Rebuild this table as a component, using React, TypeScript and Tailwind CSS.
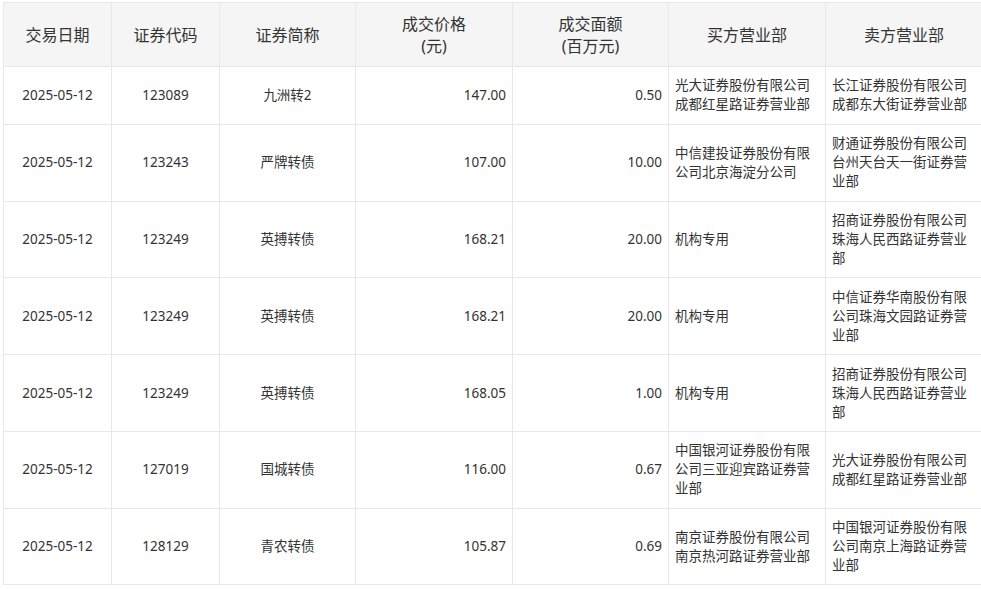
import React from "react";

type Row = {
  date: string;
  code: string;
  name: string;
  price: string;
  amount: string;
  buyer: string;
  seller: string;
};

const rows: Row[] = [
  { date: "2025-05-12", code: "123089", name: "九洲转2", price: "147.00", amount: "0.50", buyer: "光大证券股份有限公司成都红星路证券营业部", seller: "长江证券股份有限公司成都东大街证券营业部" },
  { date: "2025-05-12", code: "123243", name: "严牌转债", price: "107.00", amount: "10.00", buyer: "中信建投证券股份有限公司北京海淀分公司", seller: "财通证券股份有限公司台州天台天一街证券营业部" },
  { date: "2025-05-12", code: "123249", name: "英搏转债", price: "168.21", amount: "20.00", buyer: "机构专用", seller: "招商证券股份有限公司珠海人民西路证券营业部" },
  { date: "2025-05-12", code: "123249", name: "英搏转债", price: "168.21", amount: "20.00", buyer: "机构专用", seller: "中信证券华南股份有限公司珠海文园路证券营业部" },
  { date: "2025-05-12", code: "123249", name: "英搏转债", price: "168.05", amount: "1.00", buyer: "机构专用", seller: "招商证券股份有限公司珠海人民西路证券营业部" },
  { date: "2025-05-12", code: "127019", name: "国城转债", price: "116.00", amount: "0.67", buyer: "中国银河证券股份有限公司三亚迎宾路证券营业部", seller: "光大证券股份有限公司成都红星路证券营业部" },
  { date: "2025-05-12", code: "128129", name: "青农转债", price: "105.87", amount: "0.69", buyer: "南京证券股份有限公司南京热河路证券营业部", seller: "中国银河证券股份有限公司南京上海路证券营业部" },
];

const th = "border border-[#e8e8e8] bg-[#f5f5f5] font-normal text-[16px] leading-[22px] text-[#333] text-center px-[6px]";
const td = "border border-[#e8e8e8] text-[13.5px] leading-[19px] text-[#333] px-[6px] py-[9.4px]";

export default function App() {
  return (
    <div
      className="w-full overflow-hidden bg-white pt-[2px] pl-[3px]"
      style={{ fontFamily: '"Noto Sans", "Noto Sans CJK SC", sans-serif' }}
    >
      <table className="table-fixed border-collapse w-[979px] min-w-[979px]">
        <colgroup>
          <col className="w-[108px]" />
          <col className="w-[108px]" />
          <col className="w-[136px]" />
          <col className="w-[157px]" />
          <col className="w-[156px]" />
          <col className="w-[157px]" />
          <col className="w-[157px]" />
        </colgroup>
        <thead>
          <tr className="h-[64px]">
            <th className={th}>交易日期</th>
            <th className={th}>证券代码</th>
            <th className={th}>证券简称</th>
            <th className={th}>成交价格<br />(元)</th>
            <th className={th}>成交面额<br />(百万元)</th>
            <th className={th}>买方营业部</th>
            <th className={th}>卖方营业部</th>
          </tr>
        </thead>
        <tbody>
          {rows.map((r, i) => (
            <tr key={i}>
              <td className={`${td} text-center`}>{r.date}</td>
              <td className={`${td} text-center`}>{r.code}</td>
              <td className={`${td} text-center`}>{r.name}</td>
              <td className={`${td} text-right`}>{r.price}</td>
              <td className={`${td} text-right`}>{r.amount}</td>
              <td className={`${td} text-left break-all`}>{r.buyer}</td>
              <td className={`${td} text-left break-all`}>{r.seller}</td>
            </tr>
          ))}
        </tbody>
      </table>
    </div>
  );
}
